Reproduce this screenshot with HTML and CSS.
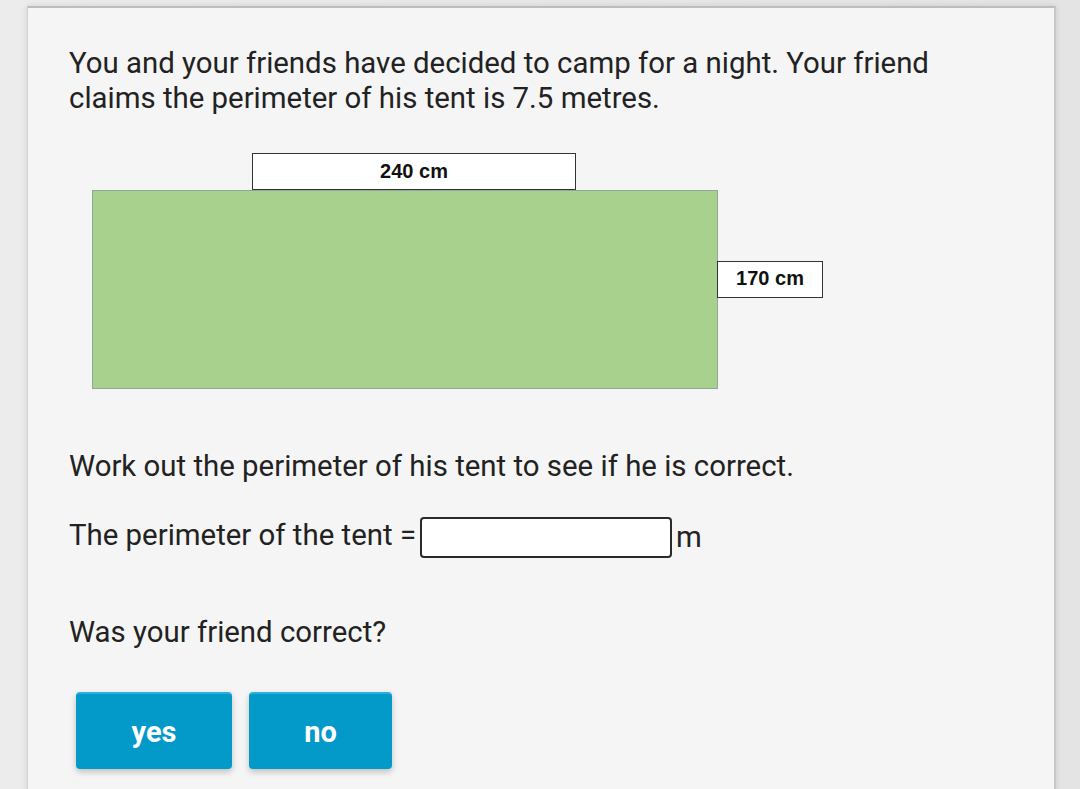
FILE: index.html
```html
<!DOCTYPE html>
<html>
<head>
<meta charset="utf-8">
<link rel="stylesheet" href="styles.css">
</head>
<body>
<div class="card">
  <p class="intro">You and your friends have decided to camp for a night. Your friend claims the perimeter of his tent is 7.5 metres.</p>
  <div class="diagram">
    <div class="label top-label">240 cm</div>
    <div class="tent-row">
      <div class="tent"></div>
      <div class="side">
        <div class="label side-label">170 cm</div>
      </div>
    </div>
  </div>
  <p class="q1">Work out the perimeter of his tent to see if he is correct.</p>
  <div class="answer-row">
    <span class="prompt">The perimeter of the tent =</span>
    <input class="answer" type="text">
    <span class="unit">m</span>
  </div>
  <p class="q2">Was your friend correct?</p>
  <div class="buttons">
    <button class="btn yes">yes</button>
    <button class="btn no">no</button>
  </div>
</div>
</body>
</html>
```
FILE: styles.css
```css
html, body {
  margin: 0;
  padding: 0;
  height: 100%;
  overflow: hidden;
}
body {
  background: linear-gradient(to right, #ececec 0%, #e4e4e4 100%);
  font-family: Roboto, "Liberation Sans", sans-serif;
  color: #222;
}
.card {
  margin: 6px 0 0 27px;
  width: 1029px;
  height: 800px;
  background: #f5f5f5;
  border-top: 2px solid #bdbdbd;
  border-left: 1px solid #d2d2d2;
  border-right: 2px solid #c8c8c8;
  box-shadow: 0 0 6px rgba(0,0,0,0.12);
  box-sizing: border-box;
  padding: 38px 0 0 41px;
}
.intro {
  margin: 0;
  font-size: 29.4px;
  line-height: 35px;
  width: 880px;
}
.diagram {
  margin: 37px 0 0 23px;
}
.label {
  background: #fff;
  border: 1px solid #333;
  font-family: "Liberation Sans", Arial, sans-serif;
  font-weight: bold;
  font-size: 20px;
  color: #111;
  text-align: center;
  box-sizing: border-box;
}
.top-label {
  margin-left: 160px;
  width: 324px;
  height: 37px;
  line-height: 34px;
}
.tent-row {
  display: flex;
}
.tent {
  width: 626px;
  height: 199px;
  background: #a9d18e;
  border: 1px solid #8fa89a;
  box-sizing: border-box;
}
.side {
  padding-top: 71px;
}
.side-label {
  margin-left: -1px;
  width: 106px;
  height: 37px;
  line-height: 33px;
}
.q1 {
  margin: 60px 0 0 0;
  font-size: 29.4px;
  line-height: 35px;
}
.answer-row {
  display: flex;
  align-items: center;
  margin-top: 33px;
  font-size: 29.4px;
}
.prompt {
  margin-bottom: 5px;
}
.answer {
  margin: 0 4px 0 4px;
  width: 252px;
  height: 41px;
  box-sizing: border-box;
  border: 2px solid #2a2a2a;
  border-radius: 4px;
  background: #fff;
  padding: 0;
}
.unit {
  margin-bottom: 2px;
}
.q2 {
  margin: 57px 0 0 0;
  font-size: 29.4px;
  line-height: 35px;
}
.buttons {
  display: flex;
  gap: 17px;
  margin: 42px 0 0 7px;
}
.btn {
  height: 77px;
  border: none;
  border-top: 2px solid #2cb0dc;
  border-radius: 4px;
  background: #0399c8;
  color: #fff;
  font-family: Roboto, "Liberation Sans", sans-serif;
  font-weight: bold;
  font-size: 29px;
  box-shadow: 0 3px 6px rgba(0,0,0,0.22);
  padding: 0;
}
.yes { width: 156px; }
.no { width: 143px; }
```
